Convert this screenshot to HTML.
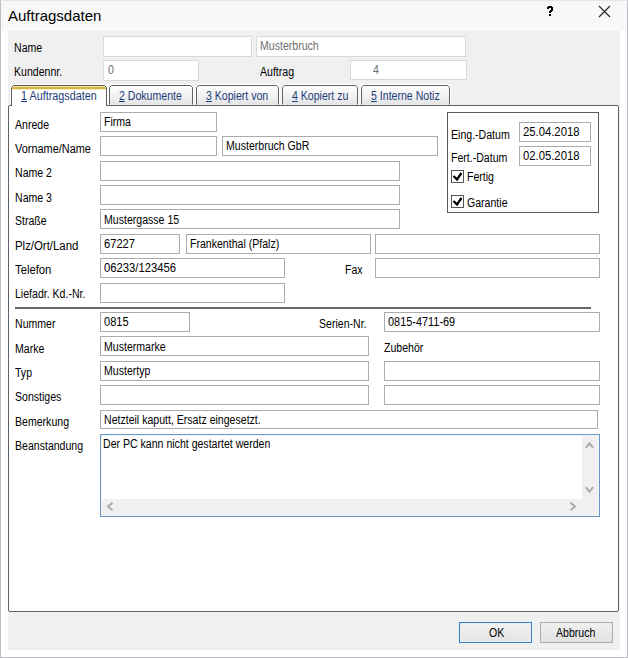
<!DOCTYPE html>
<html><head><meta charset="utf-8">
<style>
*{margin:0;padding:0;box-sizing:border-box}
html,body{width:628px;height:658px;overflow:hidden;background:#fff}
body{position:relative;font-family:"Liberation Sans",sans-serif;font-size:12px;color:#000}
.a{position:absolute}
.t{position:absolute;white-space:pre;line-height:1;font-size:12px;transform:scaleX(.88);transform-origin:0 0}
.f{position:absolute;background:#fff;border:1px solid #acacac}
.ft{position:absolute;background:#fff;border:1px solid #d9d9d9}
.tab{position:absolute;top:85px;height:20px;border:1px solid #5f6369;border-bottom:none;border-radius:2px 2px 0 0;background:linear-gradient(#fdfdfd,#f2f2f2 55%,#e4e4e4);box-shadow:1px 0 0 #fff,-1px 0 0 #fff}
.tt{color:#1c3b7b}
.u{text-decoration:underline}
</style></head><body>
<div class="a" style="left:0;top:0;width:628px;height:658px;border:1px solid #bcbec3;border-top-color:#e6e6e6"></div>
<div class="a" style="left:1px;top:1px;width:626px;height:30px;background:#f8f8f9"></div>
<div class="a" style="left:8px;top:31px;width:612px;height:619px;background:#f0f0f0"></div>
<div class="t" style="left:8px;top:8px;font-size:15px;transform:none">Auftragsdaten</div>
<svg class="a" style="left:0;top:0" width="628" height="30" shape-rendering="crispEdges" fill="#000"><rect x="548" y="6" width="4" height="2"/><rect x="547" y="7" width="2" height="2"/><rect x="551" y="7" width="2" height="4"/><rect x="550" y="10" width="2" height="2"/><rect x="549" y="11" width="2" height="2"/><rect x="549" y="14" width="2" height="2"/></svg>
<svg class="a" style="left:598px;top:5px" width="14" height="14"><path d="M1 1 L12 12 M12 1 L1 12" stroke="#222" stroke-width="1.1" fill="none"/></svg>
<div class="t" style="left:14px;top:42px;">Name</div>
<div class="ft" style="left:103px;top:36px;width:149px;height:21px;"></div>
<div class="ft" style="left:256px;top:36px;width:210px;height:21px;"></div>
<div class="t" style="left:260px;top:40px;color:#6d6d6d">Musterbruch</div>
<div class="t" style="left:14px;top:66px;">Kundennr.</div>
<div class="ft" style="left:103px;top:60px;width:96px;height:21px;"></div>
<div class="t" style="left:108px;top:64px;color:#6d6d6d">0</div>
<div class="t" style="left:260px;top:66px;">Auftrag</div>
<div class="ft" style="left:350px;top:60px;width:117px;height:20px;"></div>
<div class="t" style="left:373px;top:64px;color:#6d6d6d">4</div>
<div class="a" style="left:8px;top:105px;width:611px;height:507px;border:1px solid #5e6166;border-radius:2px;background:#fff"></div>
<svg class="a" style="left:0;top:0" width="628" height="658"><defs><linearGradient id="tg" x1="0" y1="0" x2="0" y2="1"><stop offset="0" stop-color="#fdfdfd"/><stop offset="0.5" stop-color="#f3f3f3"/><stop offset="1" stop-color="#e3e3e3"/></linearGradient></defs><path d="M110 104.5 V88 L112 86 H191 L193 88 V104.5 Z" fill="url(#tg)"/><path d="M108.5 104.5 V87.5 L110.5 84.5 H191.5 L193.5 87.5 V104.5" stroke="#ffffff" stroke-width="1" fill="none"/><path d="M109.5 104.5 V87.5 L111.5 85.5 H190.5 L192.5 87.5 V104.5" stroke="#5d6166" stroke-width="1" fill="none"/><path d="M197 104.5 V88 L199 86 H277 L279 88 V104.5 Z" fill="url(#tg)"/><path d="M195.5 104.5 V87.5 L197.5 84.5 H277.5 L279.5 87.5 V104.5" stroke="#ffffff" stroke-width="1" fill="none"/><path d="M196.5 104.5 V87.5 L198.5 85.5 H276.5 L278.5 87.5 V104.5" stroke="#5d6166" stroke-width="1" fill="none"/><path d="M283 104.5 V88 L285 86 H356 L358 88 V104.5 Z" fill="url(#tg)"/><path d="M281.5 104.5 V87.5 L283.5 84.5 H356.5 L358.5 87.5 V104.5" stroke="#ffffff" stroke-width="1" fill="none"/><path d="M282.5 104.5 V87.5 L284.5 85.5 H355.5 L357.5 87.5 V104.5" stroke="#5d6166" stroke-width="1" fill="none"/><path d="M362 104.5 V88 L364 86 H448 L450 88 V104.5 Z" fill="url(#tg)"/><path d="M360.5 104.5 V87.5 L362.5 84.5 H448.5 L450.5 87.5 V104.5" stroke="#ffffff" stroke-width="1" fill="none"/><path d="M361.5 104.5 V87.5 L363.5 85.5 H447.5 L449.5 87.5 V104.5" stroke="#5d6166" stroke-width="1" fill="none"/><path d="M12 106 V88 L14 86 H104 L106 88 V106 Z" fill="#fff"/><path d="M10.5 104.5 V87.5 L12.5 84.5 H104.5 L107.5 87.5 V104.5" stroke="#ffffff" stroke-width="1" fill="none"/><clipPath id="ac"><path d="M12 106 V88 L14 86 H104 L106 88 V106 Z"/></clipPath><g clip-path="url(#ac)"><rect x="11" y="86" width="96" height="1" fill="#f2eaa0"/><rect x="11" y="87" width="96" height="2" fill="#d6b446"/><rect x="11" y="89" width="96" height="1" fill="#f6f1bd"/></g><path d="M11.5 105 V87.5 L13.5 85.5 H104.5 L106.5 87.5 V105" stroke="#5b5b5b" stroke-width="1" fill="none"/></svg>
<div class="t" style="left:21px;top:90px;color:#1c3b7b;transform:scaleX(.9)"><span class="u">1</span> Auftragsdaten</div>
<div class="t" style="left:119px;top:90px;color:#1c3b7b"><span class="u">2</span> Dokumente</div>
<div class="t" style="left:206px;top:90px;color:#1c3b7b"><span class="u">3</span> Kopiert von</div>
<div class="t" style="left:292px;top:90px;color:#1c3b7b"><span class="u">4</span> Kopiert zu</div>
<div class="t" style="left:371px;top:90px;color:#1c3b7b"><span class="u">5</span> Interne Notiz</div>
<div class="t" style="left:15px;top:119px;">Anrede</div>
<div class="t" style="left:15px;top:143px;transform:scaleX(0.91);">Vorname/Name</div>
<div class="t" style="left:15px;top:167px;">Name 2</div>
<div class="t" style="left:15px;top:192px;">Name 3</div>
<div class="t" style="left:15px;top:215px;">Straße</div>
<div class="t" style="left:15px;top:240px;transform:scaleX(0.95);">Plz/Ort/Land</div>
<div class="t" style="left:15px;top:264px;transform:scaleX(0.94);">Telefon</div>
<div class="t" style="left:15px;top:288px;">Liefadr. Kd.-Nr.</div>
<div class="t" style="left:15px;top:318px;">Nummer</div>
<div class="t" style="left:15px;top:343px;">Marke</div>
<div class="t" style="left:15px;top:367px;">Typ</div>
<div class="t" style="left:15px;top:391px;">Sonstiges</div>
<div class="t" style="left:15px;top:416px;">Bemerkung</div>
<div class="t" style="left:15px;top:440px;">Beanstandung</div>
<div class="t" style="left:345px;top:264px;">Fax</div>
<div class="t" style="left:319px;top:318px;">Serien-Nr.</div>
<div class="t" style="left:384px;top:342px;">Zubehör</div>
<div class="f" style="left:100px;top:112px;width:117px;height:20px;"></div>
<div class="t" style="left:104px;top:116px;">Firma</div>
<div class="f" style="left:100px;top:136px;width:117px;height:20px;"></div>
<div class="f" style="left:222px;top:136px;width:216px;height:20px;"></div>
<div class="t" style="left:226px;top:140px;">Musterbruch GbR</div>
<div class="f" style="left:100px;top:161px;width:300px;height:20px;"></div>
<div class="f" style="left:100px;top:185px;width:300px;height:20px;"></div>
<div class="f" style="left:100px;top:209px;width:300px;height:20px;"></div>
<div class="t" style="left:104px;top:214px;">Mustergasse 15</div>
<div class="f" style="left:100px;top:234px;width:80px;height:20px;"></div>
<div class="t" style="left:104px;top:238px;transform:scaleX(0.93);">67227</div>
<div class="f" style="left:186px;top:234px;width:185px;height:20px;"></div>
<div class="t" style="left:190px;top:238px;">Frankenthal (Pfalz)</div>
<div class="f" style="left:375px;top:234px;width:225px;height:20px;"></div>
<div class="f" style="left:100px;top:258px;width:185px;height:20px;"></div>
<div class="t" style="left:104px;top:262px;transform:scaleX(0.94);">06233/123456</div>
<div class="f" style="left:375px;top:258px;width:225px;height:20px;"></div>
<div class="f" style="left:100px;top:283px;width:185px;height:20px;"></div>
<div class="a" style="left:15px;top:307px;width:576px;height:2px;background:#666666"></div>
<div class="f" style="left:100px;top:312px;width:90px;height:20px;"></div>
<div class="t" style="left:104px;top:316px;transform:scaleX(0.92);">0815</div>
<div class="f" style="left:384px;top:312px;width:216px;height:20px;"></div>
<div class="t" style="left:388px;top:316px;transform:scaleX(0.91);">0815-4711-69</div>
<div class="f" style="left:100px;top:336px;width:269px;height:20px;"></div>
<div class="t" style="left:104px;top:341px;">Mustermarke</div>
<div class="f" style="left:100px;top:361px;width:269px;height:20px;"></div>
<div class="t" style="left:104px;top:365px;">Mustertyp</div>
<div class="f" style="left:384px;top:361px;width:216px;height:20px;"></div>
<div class="f" style="left:100px;top:385px;width:269px;height:20px;"></div>
<div class="f" style="left:384px;top:385px;width:216px;height:20px;"></div>
<div class="f" style="left:100px;top:410px;width:498px;height:19px;"></div>
<div class="t" style="left:104px;top:414px;">Netzteil kaputt, Ersatz eingesetzt.</div>
<div class="a" style="left:100px;top:434px;width:500px;height:83px;border:1px solid #6d96c0;box-shadow:inset 0 0 0 1px #eef8fc;background:#fff"></div>
<div class="t" style="left:103px;top:438px;">Der PC kann nicht gestartet werden</div>
<div class="a" style="left:582px;top:436px;width:16px;height:79px;background:#f0f0f0"></div>
<div class="a" style="left:102px;top:499px;width:496px;height:16px;background:#f0f0f0"></div>
<svg class="a" style="left:0;top:0" width="628" height="658">
<path d="M112.5 502.8 L108 506.5 L112.5 510.2" stroke="#acacac" stroke-width="2.1" fill="none"/>
<path d="M570.5 502.8 L575 506.5 L570.5 510.2" stroke="#acacac" stroke-width="2.1" fill="none"/>
<path d="M585.8 447.8 L589.5 443.3 L593.2 447.8" stroke="#acacac" stroke-width="2.1" fill="none"/>
<path d="M585.8 487.2 L589.5 491.7 L593.2 487.2" stroke="#acacac" stroke-width="2.1" fill="none"/>
</svg>
<div class="a" style="left:447px;top:112px;width:152px;height:101px;border:1px solid #5a5a5a"></div>
<div class="t" style="left:451px;top:129px;">Eing.-Datum</div>
<div class="f" style="left:519px;top:122px;width:72px;height:20px;"></div>
<div class="t" style="left:523px;top:126px;transform:scaleX(0.94);">25.04.2018</div>
<div class="t" style="left:451px;top:152px;">Fert.-Datum</div>
<div class="f" style="left:519px;top:146px;width:72px;height:20px;"></div>
<div class="t" style="left:523px;top:150px;transform:scaleX(0.94);">02.05.2018</div>
<div class="a" style="left:451px;top:170px;width:13px;height:13px;border:1px solid #555;background:#fff"></div>
<div class="a" style="left:451px;top:195px;width:13px;height:13px;border:1px solid #555;background:#fff"></div>
<svg class="a" style="left:0;top:0" width="628" height="658">
<path d="M453.5 176 L457 179.5 L461.5 173" stroke="#000" stroke-width="2.2" fill="none"/>
<path d="M453.5 201 L457 204.5 L461.5 198" stroke="#000" stroke-width="2.2" fill="none"/>
</svg>
<div class="t" style="left:467px;top:171px;">Fertig</div>
<div class="t" style="left:467px;top:197px;">Garantie</div>
<div class="a" style="left:459px;top:622px;width:73px;height:21px;border:1px solid #4d7ab5;box-shadow:inset 0 0 0 1px #e3f3fb,0 0 0 1px #dcf6fc;background:linear-gradient(#f2f2f2,#e3e3e3)"></div>
<div class="t" style="left:489px;top:627px;">OK</div>
<div class="a" style="left:540px;top:622px;width:73px;height:21px;border:1px solid #adadad;background:linear-gradient(#f0f0f0,#e1e1e1)"></div>
<div class="t" style="left:556px;top:627px;">Abbruch</div>
</body></html>
